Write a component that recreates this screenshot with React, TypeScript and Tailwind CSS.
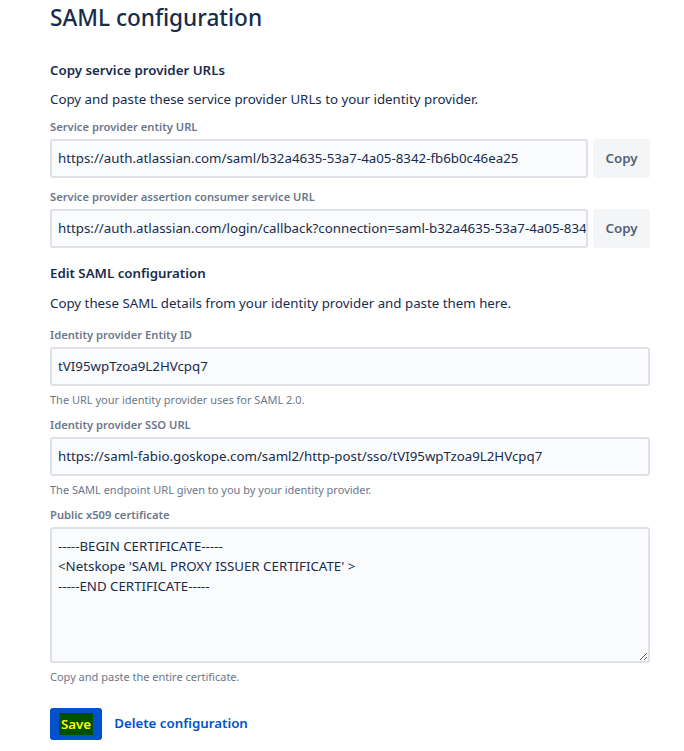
export default function App() {
  const font = { fontFamily: '"Noto Sans", "Open Sans", sans-serif' };

  return (
    <div className="min-h-[751px] bg-white text-[#172B4D]" style={font}>
      <div className="ml-[50px] w-[600px] pt-[2px]">
        <h1 className="text-[22.6px] font-medium leading-[32px]">SAML configuration</h1>

        <h2 className="mt-[26px] text-[13.3px] font-semibold leading-[20px]">Copy service provider URLs</h2>
        <p className="mt-[9px] text-[13.3px] leading-[20px]">
          Copy and paste these service provider URLs to your identity provider.
        </p>

        <Label className="mt-[10px]">Service provider entity URL</Label>
        <div className="flex gap-[5px]">
          <Field value="https://auth.atlassian.com/saml/b32a4635-53a7-4a05-8342-fb6b0c46ea25" />
          <CopyButton />
        </div>

        <Label className="mt-[11px]">Service provider assertion consumer service URL</Label>
        <div className="flex gap-[5px]">
          <Field value="https://auth.atlassian.com/login/callback?connection=saml-b32a4635-53a7-4a05-8342-fb6b0c46ea25" />
          <CopyButton />
        </div>

        <h2 className="mt-[15px] text-[13.3px] font-semibold leading-[20px]">Edit SAML configuration</h2>
        <p className="mt-[10px] text-[13.3px] leading-[20px]">
          Copy these SAML details from your identity provider and paste them here.
        </p>

        <Label className="mt-[14px]">Identity provider Entity ID</Label>
        <Field value="tVI95wpTzoa9L2HVcpq7" />
        <Help>The URL your identity provider uses for SAML 2.0.</Help>

        <Label className="mt-[9px]">Identity provider SSO URL</Label>
        <Field value="https://saml-fabio.goskope.com/saml2/http-post/sso/tVI95wpTzoa9L2HVcpq7" />
        <Help>The SAML endpoint URL given to you by your identity provider.</Help>

        <Label className="mt-[9px] mb-[1px]">Public x509 certificate</Label>
        <textarea
          readOnly
          className="block h-[136px] w-full resize-y rounded-[3px] border-2 border-[#DFE1E6] bg-[#FAFBFC] px-[6px] py-[7px] text-[13.3px] leading-[20px] text-[#172B4D] outline-none"
          style={font}
          value={"-----BEGIN CERTIFICATE-----\n<Netskope 'SAML PROXY ISSUER CERTIFICATE' >\n-----END CERTIFICATE-----"}
        />
        <Help>Copy and paste the entire certificate.</Help>

        <div className="mt-[23px] flex items-center gap-[12px]">
          <button className="flex h-[32px] items-center rounded-[3px] bg-[#0052CC] px-[9px] text-[13.3px] font-semibold">
            <span className="bg-[#005000] px-[2px] leading-[22px] text-[#FFFF00]">Save</span>
          </button>
          <a className="text-[13.3px] font-semibold text-[#0052CC]">Delete configuration</a>
        </div>
      </div>
    </div>
  );
}

function Label({ children, className = "" }: { children: React.ReactNode; className?: string }) {
  return (
    <div className={`mb-[4px] text-[11.2px] font-semibold leading-[16px] text-[#6B778C] ${className}`}>
      {children}
    </div>
  );
}

function Field({ value }: { value: string }) {
  return (
    <div className="flex h-[39px] min-w-0 flex-1 items-center overflow-hidden whitespace-nowrap rounded-[3px] border-2 border-[#DFE1E6] bg-[#FAFBFC] px-[6px] text-[13.3px] text-[#172B4D]">
      {value}
    </div>
  );
}

function CopyButton() {
  return (
    <button className="h-[39px] w-[57px] shrink-0 rounded-[3px] bg-[#F4F5F7] text-[13.3px] font-semibold text-[#505F79]">
      Copy
    </button>
  );
}

function Help({ children }: { children: React.ReactNode }) {
  return <div className="mt-[6px] text-[11px] leading-[16px] text-[#6B778C]">{children}</div>;
}
